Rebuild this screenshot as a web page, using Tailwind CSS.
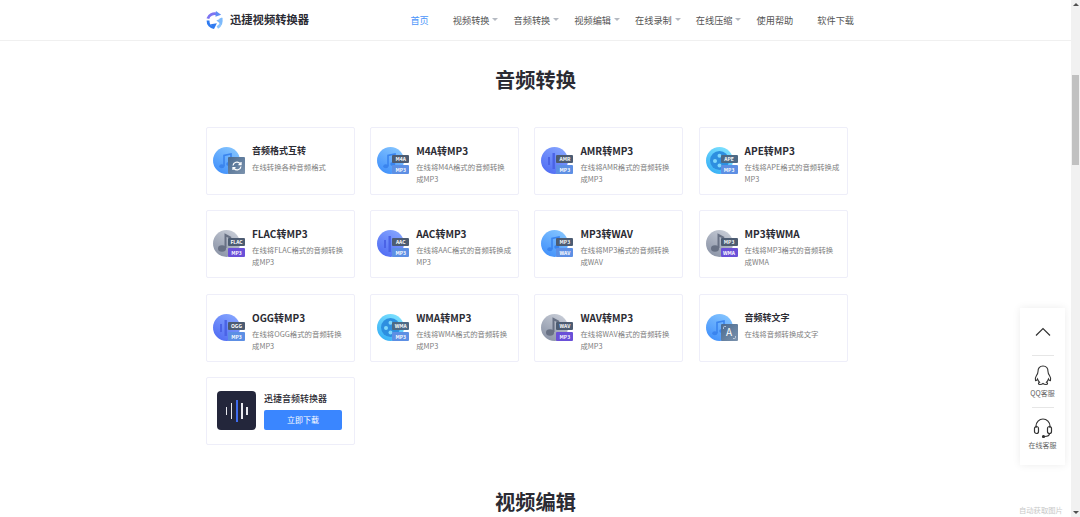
<!DOCTYPE html>
<html lang="zh-CN">
<head>
  <meta charset="UTF-8" />
  <meta name="viewport" content="width=device-width, initial-scale=1" />
  <title>音频转换 - 迅捷视频转换器</title>
  <script src="https://cdn.jsdelivr.net/npm/@tailwindcss/browser@4"></script>
</head>
<body class="bg-white h-[517px] overflow-hidden relative flex font-['Noto_Sans_CJK_SC','Noto_Sans',sans-serif]">

  <!-- shared icon parts -->
  <svg class="absolute w-0 h-0" aria-hidden="true">
    <defs>
      <linearGradient id="gBlue" x1="0.8" y1="0" x2="0.2" y2="1"><stop offset="0" stop-color="#86c6ff"/><stop offset="1" stop-color="#3f8ffb"/></linearGradient>
      <linearGradient id="gPurple" x1="0.8" y1="0" x2="0.2" y2="1"><stop offset="0" stop-color="#86a6ff"/><stop offset="1" stop-color="#4f6bf3"/></linearGradient>
      <linearGradient id="gTeal" x1="0.8" y1="0" x2="0.2" y2="1"><stop offset="0" stop-color="#7fe3ff"/><stop offset="1" stop-color="#35aef5"/></linearGradient>
      <linearGradient id="gGray" x1="0.8" y1="0" x2="0.2" y2="1"><stop offset="0" stop-color="#c9ced8"/><stop offset="1" stop-color="#8992a5"/></linearGradient>
      <symbol id="blue" viewBox="0 0 27 27"><circle cx="13.500" cy="13.500" r="13.500" fill="url(#gBlue)"/><path d="M11 19V8.500l7-1.500v9" fill="none" stroke="#3a84ee" stroke-width="1.600"/><ellipse cx="8.800" cy="19.200" rx="2.600" ry="2" fill="#3a84ee"/><ellipse cx="15.800" cy="17" rx="2.600" ry="2" fill="#3a84ee"/></symbol>
      <symbol id="purple" viewBox="0 0 27 27"><circle cx="13.500" cy="13.500" r="13.500" fill="url(#gPurple)"/><rect x="7" y="10" width="2" height="8" fill="#4a63e6"/><rect x="11.500" y="6" width="2.400" height="16" fill="#4a63e6"/></symbol>
      <symbol id="teal" viewBox="0 0 27 27"><circle cx="13.500" cy="13.500" r="13.500" fill="url(#gTeal)"/><circle cx="13.500" cy="13.500" r="9.500" fill="#2d8fe0"/><circle cx="13.500" cy="8.800" r="2" fill="#7fd8fb"/><circle cx="9" cy="14" r="2" fill="#7fd8fb"/><circle cx="13.500" cy="18.500" r="2" fill="#7fd8fb"/><circle cx="18" cy="14" r="2" fill="#7fd8fb"/></symbol>
      <symbol id="gray" viewBox="0 0 27 27"><circle cx="13.500" cy="13.500" r="13.500" fill="url(#gGray)"/><path d="M12.500 18V5l5.500 3" fill="none" stroke="#687184" stroke-width="2"/><ellipse cx="9" cy="18.500" rx="4" ry="3.200" fill="#687184"/></symbol>
    </defs>
  </svg>

  <div class="flex-1 min-w-0">
    <header class="h-[41px] border-b border-[#f0f0f0] flex items-center">
      <div class="mx-auto w-[659px] flex items-center">
        <a class="flex items-center -ml-[1px] gap-[6px]">
          <svg class="w-[19px] h-[20px]" viewBox="0 0 20 20" fill="none" stroke-width="3">
            <path d="M3 8.500C4 4.500 8.500 2.500 12.500 3.500" stroke="#7d74f2"/>
            <path d="M11.500 .5L17 4.500L11 6.500z" fill="#5f8df5"/>
            <path d="M3.200 10.500C3 14.500 6 17.500 9.500 18" stroke="#2f7bf0"/>
            <path d="M6 14.500L12.500 13.500L9.500 19.500z" fill="#2f7bf0"/>
            <path d="M16.500 8C18 12 16.500 16 13 18" stroke="#8cc4fc"/>
            <path d="M12 10.500L18.500 7.500L17.500 15z" fill="#7db9fb"/>
          </svg>
          <span class="text-[11.300px] font-bold text-[#2b2b33] leading-none">迅捷视频转换器</span>
        </a>
        <nav class="ml-[101.300px] flex items-center gap-[24px] text-[9.200px] leading-[14px] text-[#555]">
          <a class="text-[#4c95fa]">首页</a>
          <a class="relative">视频转换<i class="absolute left-[39.500px] top-[5px] border-x-[3px] border-t-[3.500px] border-x-transparent border-t-[#b5bac2]"></i></a>
          <a class="relative">音频转换<i class="absolute left-[39.500px] top-[5px] border-x-[3px] border-t-[3.500px] border-x-transparent border-t-[#b5bac2]"></i></a>
          <a class="relative">视频编辑<i class="absolute left-[39.500px] top-[5px] border-x-[3px] border-t-[3.500px] border-x-transparent border-t-[#b5bac2]"></i></a>
          <a class="relative">在线录制<i class="absolute left-[39.500px] top-[5px] border-x-[3px] border-t-[3.500px] border-x-transparent border-t-[#b5bac2]"></i></a>
          <a class="relative">在线压缩<i class="absolute left-[39.500px] top-[5px] border-x-[3px] border-t-[3.500px] border-x-transparent border-t-[#b5bac2]"></i></a>
          <a>使用帮助</a>
          <a>软件下载</a>
        </nav>
      </div>
    </header>

    <main class="mx-auto w-[659px]">
      <h2 class="text-[20.200px] font-bold text-[#2b2b33] text-center leading-[28px] mt-[25px] mb-[33px]">音频转换</h2>

      <div class="grid grid-cols-[repeat(4,149px)] auto-rows-[68px] gap-x-[15.200px] gap-y-[15.300px]">

        <a class="flex items-start pl-[6px] pt-[16px] bg-white border border-[#eeeef9] rounded-[2px]">
          <div class="relative w-[39px] h-[27px] mt-[3px] shrink-0">
            <svg class="w-[27px] h-[27px]"><use href="#blue"/></svg>
            <div class="absolute left-[15px] top-[10px] w-[17px] h-[17px] rounded-[1px] bg-linear-to-br from-[#4a6a90] to-[#7c93ad] flex items-center justify-center">
              <svg class="w-[12px] h-[12px]" viewBox="0 0 24 24" fill="none" stroke="#fff" stroke-width="2.500"><path d="M4 11a8 8 0 0 1 14-4l2 2M20 13a8 8 0 0 1-14 4l-2-2"/><path d="M20 4v5h-5M4 20v-5h5"/></svg>
            </div>
          </div>
          <div class="whitespace-nowrap">
            <h3 class="text-[9px] font-bold leading-[14px] text-[#2b2b33]">音频格式互转</h3>
            <p class="text-[7.400px] leading-[12px] text-[#808080] mt-[3px]">在线转换各种音频格式</p>
          </div>
        </a>

        <a class="flex items-start pl-[6px] pt-[16px] bg-white border border-[#eeeef9] rounded-[2px]">
          <div class="relative w-[39px] h-[27px] mt-[3px] shrink-0">
            <svg class="w-[27px] h-[27px]"><use href="#blue"/></svg>
            <div class="absolute left-[15px] top-[8px] w-[17px] h-[8px] rounded-[1px] bg-[#4d5c72] text-white text-[5px] font-bold leading-[8px] text-center">M4A</div>
            <div class="absolute left-[15px] top-[18px] w-[17px] h-[9px] rounded-[1px] bg-[#5d8fe4] text-white text-[5px] font-bold leading-[9px] text-center">MP3</div>
          </div>
          <div class="whitespace-nowrap">
            <h3 class="text-[10px] font-bold leading-[14px] text-[#2b2b33]">M4A转MP3</h3>
            <p class="text-[7.400px] leading-[12px] text-[#808080] mt-[3px]">在线将M4A格式的音频转换<br>成MP3</p>
          </div>
        </a>

        <a class="flex items-start pl-[6px] pt-[16px] bg-white border border-[#eeeef9] rounded-[2px]">
          <div class="relative w-[39px] h-[27px] mt-[3px] shrink-0">
            <svg class="w-[27px] h-[27px]"><use href="#purple"/></svg>
            <div class="absolute left-[15px] top-[8px] w-[17px] h-[8px] rounded-[1px] bg-[#4d5c72] text-white text-[5px] font-bold leading-[8px] text-center">AMR</div>
            <div class="absolute left-[15px] top-[18px] w-[17px] h-[9px] rounded-[1px] bg-[#5d8fe4] text-white text-[5px] font-bold leading-[9px] text-center">MP3</div>
          </div>
          <div class="whitespace-nowrap">
            <h3 class="text-[10px] font-bold leading-[14px] text-[#2b2b33]">AMR转MP3</h3>
            <p class="text-[7.400px] leading-[12px] text-[#808080] mt-[3px]">在线将AMR格式的音频转换<br>成MP3</p>
          </div>
        </a>

        <a class="flex items-start pl-[6px] pt-[16px] bg-white border border-[#eeeef9] rounded-[2px]">
          <div class="relative w-[39px] h-[27px] mt-[3px] shrink-0">
            <svg class="w-[27px] h-[27px]"><use href="#teal"/></svg>
            <div class="absolute left-[15px] top-[8px] w-[17px] h-[8px] rounded-[1px] bg-[#4d6a86] text-white text-[5px] font-bold leading-[8px] text-center">APE</div>
            <div class="absolute left-[15px] top-[18px] w-[17px] h-[9px] rounded-[1px] bg-[#5d8fe4] text-white text-[5px] font-bold leading-[9px] text-center">MP3</div>
          </div>
          <div class="whitespace-nowrap">
            <h3 class="text-[10px] font-bold leading-[14px] text-[#2b2b33]">APE转MP3</h3>
            <p class="text-[7.400px] leading-[12px] text-[#808080] mt-[3px]">在线将APE格式的音频转换成<br>MP3</p>
          </div>
        </a>

        <a class="flex items-start pl-[6px] pt-[16px] bg-white border border-[#eeeef9] rounded-[2px]">
          <div class="relative w-[39px] h-[27px] mt-[3px] shrink-0">
            <svg class="w-[27px] h-[27px]"><use href="#gray"/></svg>
            <div class="absolute left-[15px] top-[8px] w-[17px] h-[8px] rounded-[1px] bg-[#4d5c72] text-white text-[5px] font-bold leading-[8px] text-center">FLAC</div>
            <div class="absolute left-[15px] top-[18px] w-[17px] h-[9px] rounded-[1px] bg-[#6a50d8] text-white text-[5px] font-bold leading-[9px] text-center">MP3</div>
          </div>
          <div class="whitespace-nowrap">
            <h3 class="text-[10px] font-bold leading-[14px] text-[#2b2b33]">FLAC转MP3</h3>
            <p class="text-[7.400px] leading-[12px] text-[#808080] mt-[3px]">在线将FLAC格式的音频转换<br>成MP3</p>
          </div>
        </a>

        <a class="flex items-start pl-[6px] pt-[16px] bg-white border border-[#eeeef9] rounded-[2px]">
          <div class="relative w-[39px] h-[27px] mt-[3px] shrink-0">
            <svg class="w-[27px] h-[27px]"><use href="#purple"/></svg>
            <div class="absolute left-[15px] top-[8px] w-[17px] h-[8px] rounded-[1px] bg-[#4d5c72] text-white text-[5px] font-bold leading-[8px] text-center">AAC</div>
            <div class="absolute left-[15px] top-[18px] w-[17px] h-[9px] rounded-[1px] bg-[#5d8fe4] text-white text-[5px] font-bold leading-[9px] text-center">MP3</div>
          </div>
          <div class="whitespace-nowrap">
            <h3 class="text-[10px] font-bold leading-[14px] text-[#2b2b33]">AAC转MP3</h3>
            <p class="text-[7.400px] leading-[12px] text-[#808080] mt-[3px]">在线将AAC格式的音频转换成<br>MP3</p>
          </div>
        </a>

        <a class="flex items-start pl-[6px] pt-[16px] bg-white border border-[#eeeef9] rounded-[2px]">
          <div class="relative w-[39px] h-[27px] mt-[3px] shrink-0">
            <svg class="w-[27px] h-[27px]"><use href="#blue"/></svg>
            <div class="absolute left-[15px] top-[8px] w-[17px] h-[8px] rounded-[1px] bg-[#4d5c72] text-white text-[5px] font-bold leading-[8px] text-center">MP3</div>
            <div class="absolute left-[15px] top-[18px] w-[17px] h-[9px] rounded-[1px] bg-[#5d8fe4] text-white text-[5px] font-bold leading-[9px] text-center">WAV</div>
          </div>
          <div class="whitespace-nowrap">
            <h3 class="text-[10px] font-bold leading-[14px] text-[#2b2b33]">MP3转WAV</h3>
            <p class="text-[7.400px] leading-[12px] text-[#808080] mt-[3px]">在线将MP3格式的音频转换<br>成WAV</p>
          </div>
        </a>

        <a class="flex items-start pl-[6px] pt-[16px] bg-white border border-[#eeeef9] rounded-[2px]">
          <div class="relative w-[39px] h-[27px] mt-[3px] shrink-0">
            <svg class="w-[27px] h-[27px]"><use href="#gray"/></svg>
            <div class="absolute left-[15px] top-[8px] w-[17px] h-[8px] rounded-[1px] bg-[#4d5c72] text-white text-[5px] font-bold leading-[8px] text-center">MP3</div>
            <div class="absolute left-[15px] top-[18px] w-[17px] h-[9px] rounded-[1px] bg-[#6a50d8] text-white text-[5px] font-bold leading-[9px] text-center">WMA</div>
          </div>
          <div class="whitespace-nowrap">
            <h3 class="text-[10px] font-bold leading-[14px] text-[#2b2b33]">MP3转WMA</h3>
            <p class="text-[7.400px] leading-[12px] text-[#808080] mt-[3px]">在线将MP3格式的音频转换<br>成WMA</p>
          </div>
        </a>

        <a class="flex items-start pl-[6px] pt-[16px] bg-white border border-[#eeeef9] rounded-[2px]">
          <div class="relative w-[39px] h-[27px] mt-[3px] shrink-0">
            <svg class="w-[27px] h-[27px]"><use href="#purple"/></svg>
            <div class="absolute left-[15px] top-[8px] w-[17px] h-[8px] rounded-[1px] bg-[#4d5c72] text-white text-[5px] font-bold leading-[8px] text-center">OGG</div>
            <div class="absolute left-[15px] top-[18px] w-[17px] h-[9px] rounded-[1px] bg-[#5d8fe4] text-white text-[5px] font-bold leading-[9px] text-center">MP3</div>
          </div>
          <div class="whitespace-nowrap">
            <h3 class="text-[10px] font-bold leading-[14px] text-[#2b2b33]">OGG转MP3</h3>
            <p class="text-[7.400px] leading-[12px] text-[#808080] mt-[3px]">在线将OGG格式的音频转换<br>成MP3</p>
          </div>
        </a>

        <a class="flex items-start pl-[6px] pt-[16px] bg-white border border-[#eeeef9] rounded-[2px]">
          <div class="relative w-[39px] h-[27px] mt-[3px] shrink-0">
            <svg class="w-[27px] h-[27px]"><use href="#teal"/></svg>
            <div class="absolute left-[15px] top-[8px] w-[17px] h-[8px] rounded-[1px] bg-[#4d6a86] text-white text-[5px] font-bold leading-[8px] text-center">WMA</div>
            <div class="absolute left-[15px] top-[18px] w-[17px] h-[9px] rounded-[1px] bg-[#5d8fe4] text-white text-[5px] font-bold leading-[9px] text-center">MP3</div>
          </div>
          <div class="whitespace-nowrap">
            <h3 class="text-[10px] font-bold leading-[14px] text-[#2b2b33]">WMA转MP3</h3>
            <p class="text-[7.400px] leading-[12px] text-[#808080] mt-[3px]">在线将WMA格式的音频转换<br>成MP3</p>
          </div>
        </a>

        <a class="flex items-start pl-[6px] pt-[16px] bg-white border border-[#eeeef9] rounded-[2px]">
          <div class="relative w-[39px] h-[27px] mt-[3px] shrink-0">
            <svg class="w-[27px] h-[27px]"><use href="#gray"/></svg>
            <div class="absolute left-[15px] top-[8px] w-[17px] h-[8px] rounded-[1px] bg-[#4d5c72] text-white text-[5px] font-bold leading-[8px] text-center">WAV</div>
            <div class="absolute left-[15px] top-[18px] w-[17px] h-[9px] rounded-[1px] bg-[#6a50d8] text-white text-[5px] font-bold leading-[9px] text-center">MP3</div>
          </div>
          <div class="whitespace-nowrap">
            <h3 class="text-[10px] font-bold leading-[14px] text-[#2b2b33]">WAV转MP3</h3>
            <p class="text-[7.400px] leading-[12px] text-[#808080] mt-[3px]">在线将WAV格式的音频转换<br>成MP3</p>
          </div>
        </a>

        <a class="flex items-start pl-[6px] pt-[16px] bg-white border border-[#eeeef9] rounded-[2px]">
          <div class="relative w-[39px] h-[27px] mt-[3px] shrink-0">
            <svg class="w-[27px] h-[27px]"><use href="#blue"/></svg>
            <div class="absolute left-[15px] top-[10px] w-[17px] h-[17px] rounded-[1px] bg-linear-to-br from-[#4a6a90] to-[#7c93ad] flex items-center justify-center text-white text-[10px] leading-none">
              A
              <svg class="absolute inset-0 w-[17px] h-[17px]" viewBox="0 0 17 17" fill="none" stroke="#dfe7f1" stroke-width="0.700"><path d="M2.500 5V3.500A1 1 0 0 1 3.500 2.500H5M14.500 12V13.500A1 1 0 0 1 13.500 14.500H12"/></svg>
            </div>
          </div>
          <div class="whitespace-nowrap">
            <h3 class="text-[9px] font-bold leading-[14px] text-[#2b2b33]">音频转文字</h3>
            <p class="text-[7.400px] leading-[12px] text-[#808080] mt-[3px]">在线将音频转换成文字</p>
          </div>
        </a>

        <a class="flex items-center pl-[10px] bg-white border border-[#eeeef9] rounded-[2px]">
          <div class="w-[39px] h-[39px] rounded-[4px] bg-[#23263b] flex items-center justify-center gap-[3.500px] shrink-0">
            <i class="w-[1.500px] h-[8px] bg-[#e8e9ef]"></i>
            <i class="w-[1.500px] h-[16px] bg-[#e8e9ef]"></i>
            <i class="w-[2px] h-[22px] bg-[#3f6cf0]"></i>
            <i class="w-[1.500px] h-[16px] bg-[#e8e9ef]"></i>
            <i class="w-[1.500px] h-[8px] bg-[#e8e9ef]"></i>
          </div>
          <div class="ml-[8px] w-[78px]">
            <h3 class="text-[9px] font-medium leading-[14px] text-[#2b2b33] whitespace-nowrap">迅捷音频转换器</h3>
            <div class="mt-[4px] h-[20px] rounded-[2px] bg-[#3a86ff] text-white text-[8px] leading-[20px] text-center">立即下载</div>
          </div>
        </a>
      </div>

      <h2 class="text-[20.200px] font-bold text-[#2b2b33] text-center leading-[28px] mt-[43px]">视频编辑</h2>
    </main>
  </div>

  <!-- scrollbar -->
  <div class="w-[9px] h-full bg-[#f1f1f1] flex flex-col items-center shrink-0">
    <i class="mt-[3px] border-x-[3px] border-b-[3px] border-x-transparent border-b-[#505050]"></i>
    <div class="mt-[69px] w-[7px] h-[90px] bg-[#c1c1c1]"></div>
    <i class="mt-auto mb-[3px] border-x-[3px] border-t-[3px] border-x-transparent border-t-[#505050]"></i>
  </div>

  <!-- floating service panel -->
  <aside class="absolute left-[1020px] top-[308px] w-[45px] h-[157px] bg-white shadow-[0_0_8px_rgba(0,0,0,0.08)] flex flex-col items-center">
    <div class="h-[48px] w-[22px] border-b border-[#e6e6e6] flex items-center justify-center">
      <svg class="w-[16px] h-[9px]" viewBox="0 0 16 9" fill="none" stroke="#333" stroke-width="1.200"><path d="M1 8.500L8 1.500L15 8.500"/></svg>
    </div>
    <div class="h-[52px] w-[22px] border-b border-[#e6e6e6] flex flex-col items-center pt-[9px]">
      <svg class="w-[18px] h-[21px] shrink-0" viewBox="0 0 18 21" fill="none" stroke="#333" stroke-width="1.100"><path d="M9 1C5.500 1 4 3.500 4 6.500C4 8 3.500 9 2.500 10.500C1.500 12 1 14 1.500 15.500C2 16 3 15 3.500 14C4 15.500 4.500 16.500 5.500 17.300C4 18 4 19.500 6 19.500C7.500 19.500 8.500 19 9 18.500C9.500 19 10.500 19.500 12 19.500C14 19.500 14 18 12.500 17.300C13.500 16.500 14 15.500 14.500 14C15 15 16 16 16.500 15.500C17 14 16.500 12 15.500 10.500C14.500 9 14 8 14 6.500C14 3.500 12.500 1 9 1Z"/></svg>
      <span class="text-[7px] leading-[9px] text-[#666] whitespace-nowrap mt-[3px]">QQ客服</span>
    </div>
    <div class="flex flex-col items-center pt-[10px]">
      <svg class="w-[20px] h-[20px] shrink-0" viewBox="0 0 20 20" fill="none" stroke="#333" stroke-width="1.200"><path d="M3 10V8a7 7 0 0 1 14 0v2"/><rect x="1.500" y="8.500" width="4" height="7" rx="2"/><rect x="14.500" y="8.500" width="4" height="7" rx="2"/><path d="M16.500 15.500C16.500 17.500 14.500 18.500 11.500 18.500"/><circle cx="10.500" cy="18.500" r="1" fill="#333"/></svg>
      <span class="text-[7px] leading-[9px] text-[#666] whitespace-nowrap mt-[3px]">在线客服</span>
    </div>
  </aside>

  <span class="absolute left-[1019px] top-[505px] text-[7.300px] leading-[10px] text-[#c8c8c8] whitespace-nowrap">自动获取图片</span>
</body>
</html>
